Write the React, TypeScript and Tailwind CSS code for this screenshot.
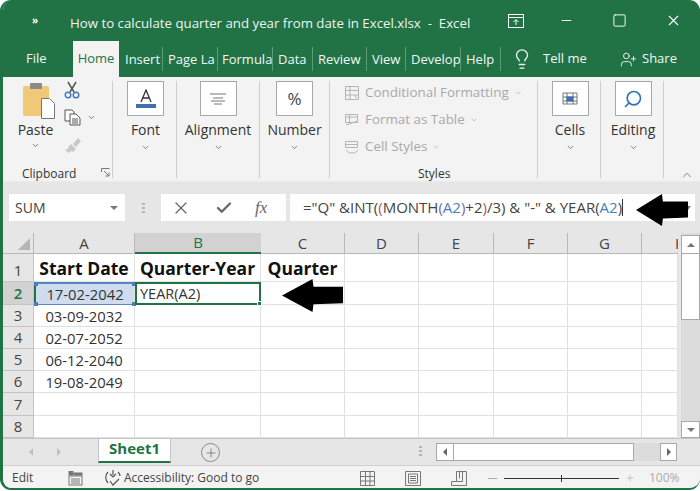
import React from 'react';
import { ChevronDown, ChevronUp, Lightbulb, Minus, Plus, Search, Square, UserPlus, X, Check } from 'lucide-react';

const tabs: [string, string][] = [
  ['Insert', 'w-[44px] pl-[6px]'],
  ['Page La', 'w-[55px] pl-[5px]'],
  ['Formula', 'w-[55px] pl-[4px]'],
  ['Data', 'w-[40px] pl-[5px]'],
  ['Review', 'w-[54px] pl-[5px]'],
  ['View', 'w-[39px] pl-[5px]'],
  ['Develop', 'w-[55px] pl-[5px]'],
  ['Help', 'w-[40px] pl-[5px]'],
];

const columns = ['A', 'B', 'C', 'D', 'E', 'F', 'G', 'H'];
const rowHeights = ['h-[28px]', 'h-[23px]', 'h-[22px]', 'h-[22px]', 'h-[22px]', 'h-[22px]', 'h-[23px]', 'h-[22px]'];
const dates = ['Start Date', '17-02-2042', '03-09-2032', '02-07-2052', '06-12-2040', '19-08-2049', '', ''];

const Arrow = ({ className }: { className: string }) => (
  <svg viewBox="0 0 60 34" preserveAspectRatio="none" className={className}>
    <polygon points="0,17 30,0 31,8 60,8 60,25 31,26 30,34" fill="#000" />
  </svg>
);

const Dots = () => (
  <div className="flex flex-col gap-[2px]">
    <span className="w-[3px] h-[2px] bg-[#b5b5b5]" />
    <span className="w-[3px] h-[2px] bg-[#b5b5b5]" />
    <span className="w-[3px] h-[2px] bg-[#b5b5b5]" />
  </div>
);

const RibbonButton = ({ label, width, children }: { label: string; width: string; children: React.ReactNode }) => (
  <div className={`${width} h-[97px] shrink-0 border-r border-[#cfcfcf] flex flex-col items-center`}>
    <div className="w-[37px] h-[35px] bg-white border border-[#a8a8a8] flex items-center justify-center">{children}</div>
    <span className="text-[14px] leading-[18px] mt-[5px] text-[#333]">{label}</span>
    <ChevronDown className="w-[9px] h-[9px] mt-[4px] text-[#555]" />
  </div>
);

const StyleRow = ({ label, children }: { label: string; children: React.ReactNode }) => (
  <div className="flex items-center h-[27px] gap-[5px] text-[13.4px] text-[#a9a9a9]">
    <svg viewBox="0 0 16 16" className="w-[16px] h-[16px]" fill="none" stroke="#b5b5b5">
      {children}
    </svg>
    <span>{label}</span>
    <ChevronDown className="w-[8px] h-[8px] text-[#b0b0b0]" />
  </div>
);

const App = () => {
  return (
    <div className="w-[700px] h-[491px] bg-white overflow-hidden font-['Open_Sans',sans-serif]">
      <div className="relative w-full h-[490px] flex flex-col rounded-[11px] overflow-hidden border-l-[3px] border-b-[2px] border-[#217346] bg-[#e6e6e6]">
        {/* title bar */}
        <div className="h-[41px] bg-[#217346] text-white flex items-center shrink-0">
          <span className="w-[67px] pl-[29px] text-[10px] font-bold">»</span>
          <span className="w-[432px] mt-[6px] text-[13.25px] whitespace-nowrap text-[#eef5f0]">
            How to calculate quarter and year from date in Excel.xlsx&nbsp; -&nbsp; Excel
          </span>
          <svg viewBox="0 0 16 14" className="w-[16px] h-[14px] ml-[6px]" fill="none" stroke="#fff">
            <rect x="0.5" y="0.5" width="15" height="13" />
            <path d="M0 3.5h16M8 11V6M5.5 8 8 5.5 10.5 8" />
          </svg>
          <Minus className="w-[15px] h-[15px] ml-[35px]" strokeWidth={1.5} />
          <Square className="w-[15px] h-[15px] ml-[38px]" strokeWidth={1.5} />
          <X className="w-[17px] h-[17px] ml-[38px]" strokeWidth={1.5} />
        </div>

        {/* tabs */}
        <div className="h-[36px] bg-[#217346] text-[#f2f7f4] text-[13px] flex items-center shrink-0">
          <span className="w-[70px] pl-[23px]">File</span>
          <span className="w-[46px] h-full bg-[#f3f3f3] text-[#217346] flex items-center justify-center">Home</span>
          {tabs.map(([name, width]) => (
            <div key={name} className={`${width} h-[24px] leading-[24px] border-r border-[#5d9a78] overflow-hidden whitespace-nowrap`}>
              {name}
            </div>
          ))}
          <Lightbulb className="w-[22px] h-[22px] ml-[10px]" strokeWidth={1.4} />
          <span className="ml-[10px] w-[77px]">Tell me</span>
          <UserPlus className="w-[17px] h-[17px]" strokeWidth={1.3} />
          <span className="ml-[5px]">Share</span>
        </div>

        {/* ribbon */}
        <div className="h-[105px] bg-[#f3f3f3] flex pt-[4px] shrink-0 relative border-b border-[#ebebeb]">
          <div className="w-[110px] h-[97px] shrink-0 border-r border-[#cfcfcf] flex relative">
            <div className="w-[61px] flex flex-col items-center pl-[4px]">
              <svg viewBox="0 0 32 38" className="w-[32px] h-[38px] ml-[6px]">
                <rect x="0" y="5" width="26" height="30" rx="2" fill="#f0c878" />
                <rect x="7" y="2" width="12" height="6" rx="1" fill="#8a8a8a" />
                <path d="M18.5 17.5h8l5 5v15h-13z" fill="#fff" stroke="#777" />
              </svg>
              <span className="text-[14px] leading-[18px] text-[#333] mt-[2px]">Paste</span>
              <ChevronDown className="w-[9px] h-[9px] text-[#555] mt-[2px]" />
            </div>
            <div className="flex flex-col items-start">
              <svg viewBox="0 0 16 18" className="w-[16px] h-[18px]" fill="none">
                <path d="M4 1 10 11M12 1 6 11" stroke="#555" strokeWidth="1.5" />
                <circle cx="4" cy="14" r="2.8" stroke="#3f78b5" strokeWidth="1.4" />
                <circle cx="12" cy="14" r="2.8" stroke="#3f78b5" strokeWidth="1.4" />
              </svg>
              <div className="flex items-center mt-[10px]">
                <svg viewBox="0 0 17 17" className="w-[17px] h-[17px]" fill="#fff" stroke="#555">
                  <path d="M1 1h7l2 2v9H1z" />
                  <path d="M6 5h6l4 4v7H6z" />
                  <path d="M8 10h6M8 12h6M8 14h6" />
                </svg>
                <ChevronDown className="w-[9px] h-[9px] text-[#555] ml-[6px]" />
              </div>
              <svg viewBox="0 0 17 15" className="w-[17px] h-[15px] mt-[12px]" fill="#c8c8c8">
                <path d="M9 6 14 0l3 3-5 6zM7 6l5 5-3 3-2-1-2 2-4-3 3-1 1-3z" />
              </svg>
            </div>
            <span className="absolute left-[19px] top-[85px] text-[12px] leading-[16px] text-[#333]">Clipboard</span>
            <svg viewBox="0 0 9 9" className="absolute left-[98px] top-[87px] w-[9px] h-[9px]" fill="none" stroke="#777">
              <path d="M.5 4V.5H8.5M3 3l5 5M8 4.5V8H4.5" />
            </svg>
          </div>

          <RibbonButton label="Font" width="w-[64px] pl-[2px]">
            <svg viewBox="0 0 20 20" className="w-[20px] h-[20px]">
              <path d="M5 13 10 1l5 12M7 9h6" fill="none" stroke="#333" strokeWidth="1.3" />
              <rect x="0" y="15" width="20" height="4" fill="#3f6fb0" />
            </svg>
          </RibbonButton>
          <RibbonButton label="Alignment" width="w-[83px]">
            <svg viewBox="0 0 16 12" className="w-[16px] h-[12px]" stroke="#777" strokeWidth="1.2">
              <path d="M0 1h16M3 5h10M1 8h14M4 11h8" />
            </svg>
          </RibbonButton>
          <RibbonButton label="Number" width="w-[70px]">
            <span className="text-[17px] text-[#444] leading-none">%</span>
          </RibbonButton>

          <div className="w-[208px] h-[97px] shrink-0 border-r border-[#cfcfcf] relative pl-[14px]">
            <div className="-mt-[2px]">
              <StyleRow label="Conditional Formatting">
                <path d="M1.5 1.5h13v13h-13zM1.5 5.5h13M1.5 10h13M6 1.5v13M10 10l3 3" />
              </StyleRow>
              <StyleRow label="Format as Table">
                <path d="M1.5 2.5h12v8h-12zM1.5 5h12M5.5 2.5v8M2 13l12-4" />
              </StyleRow>
              <StyleRow label="Cell Styles">
                <path d="M1.5 2.5h12v6h-12zM1.5 5.5h12M2 11c3 4 9 4 12 0" />
              </StyleRow>
            </div>
            <span className="absolute left-[88px] top-[85px] text-[12px] leading-[16px] text-[#333]">Styles</span>
          </div>

          <RibbonButton label="Cells" width="w-[63px] pl-[2px]">
            <svg viewBox="0 0 16 18" className="w-[16px] h-[18px]" fill="none" stroke="#777">
              <path d="M1 3h14v11H1zM1 7h14M1 11h14M5 3v11M11 3v11" />
              <rect x="5" y="7" width="6" height="4" fill="#3f6fb0" stroke="#3f6fb0" />
            </svg>
          </RibbonButton>
          <RibbonButton label="Editing" width="w-[63px] pl-[2px]">
            <Search className="w-[20px] h-[20px] text-[#2f75b5] -scale-x-100" strokeWidth={2} />
          </RibbonButton>
          <ChevronUp className="absolute right-[6px] top-[91px] w-[14px] h-[14px] text-[#666]" strokeWidth={1.3} />
        </div>

        {/* formula bar */}
        <div className="h-[51px] flex items-center pl-[6px] shrink-0">
          <div className="w-[116px] h-[27px] bg-white flex items-center justify-between pl-[6px] pr-[7px] text-[14px] text-[#444]">
            SUM
            <span className="w-0 h-0 border-x-[4px] border-x-transparent border-t-[4px] border-t-[#777]" />
          </div>
          <div className="w-[36px] flex justify-center">
            <Dots />
          </div>
          <div className="w-[125px] h-[27px] bg-white flex items-center text-[#666]">
            <X className="w-[20px] h-[20px] ml-[10px]" strokeWidth={1.5} />
            <Check className="w-[18px] h-[18px] ml-[24px]" strokeWidth={3} />
            <span className="ml-[22px] italic font-['Liberation_Serif',serif] text-[17px]">fx</span>
          </div>
          <div className="w-[405px] h-[27px] ml-[4px] bg-white flex items-center pl-[13px] pr-[3px] text-[15px] text-[#444] whitespace-nowrap">
            <span>="Q" &amp;INT(</span>
            <span className="text-[#c0504d]">(</span>
            <span>MONTH</span>
            <span className="text-[#7a5fa8]">(</span>
            <span className="text-[#4a7ebb]">A2</span>
            <span className="text-[#7a5fa8]">)</span>
            <span>+2</span>
            <span className="text-[#c0504d]">)</span>
            <span>/3) &amp; "-" &amp; YEAR(</span>
            <span className="text-[#4a7ebb]">A2</span>
            <span>)</span>
            <span className="w-px h-[17px] bg-[#333]" />
            <span className="ml-auto mr-[1px] w-0 h-0 border-x-[3px] border-x-transparent border-t-[4px] border-t-[#777]" />
          </div>
        </div>

        {/* sheet */}
        <div className="flex h-[205px] shrink-0">
          <div className="grid grid-cols-[31px_101px_126px_84px_74px_75px_74px_74px_36px] content-start w-[675px] bg-white overflow-hidden">
            <div className="h-[21px] bg-[#e6e6e6] border-r border-b border-[#b8b8b8] relative">
              <span className="absolute right-[3px] bottom-[3px] w-0 h-0 border-l-[12px] border-l-transparent border-b-[12px] border-b-[#b5b5b5]" />
            </div>
            {columns.map((c) => (
              <div
                key={c}
                className={
                  c === 'B'
                    ? 'h-[21px] bg-[#d2d2d2] border-b-2 border-[#217346] text-[#217346] text-[15px] flex items-center justify-center'
                    : c === 'H'
                      ? 'h-[21px] bg-[#e6e6e6] border-b border-[#b8b8b8] text-[#444] text-[15px] flex items-center justify-start pl-[33px] overflow-hidden'
                      : 'h-[21px] bg-[#e6e6e6] border-r border-b border-[#b8b8b8] text-[#444] text-[15px] flex items-center justify-center'
                }
              >
                {c}
              </div>
            ))}
            {rowHeights.map((h, r) => (
              <React.Fragment key={h + r}>
                <div
                  className={`${h} border-r border-b border-[#c4c4c4] flex justify-center text-[15px] ${
                    r === 0 ? 'items-end' : 'items-center'
                  } ${r === 1 ? 'bg-[#d2d2d2] text-[#217346] font-semibold' : 'bg-[#e6e6e6] text-[#444]'}`}
                >
                  {r + 1}
                </div>
                {columns.map((c) => {
                  let content = '';
                  let cls = 'border-r border-b border-[#e0e0e0]';
                  if (r === 0 && c === 'B') content = 'Quarter-Year';
                  if (r === 0 && c === 'C') content = 'Quarter';
                  if (c === 'A') content = dates[r];
                  if (r === 0) cls += ' text-[17.5px] font-bold text-[#111] items-end justify-center';
                  else if (c === 'A') cls += ' text-[14.8px] text-[#333] items-center justify-center pt-[1px]';
                  if (r === 1 && c === 'A') cls += ' relative bg-[#cfdcee] border-y-2 border-l-2 border-l-[#217346] border-y-[#5b87c5]';
                  if (r === 1 && c === 'B') cls = 'border-2 border-[#217346] text-[14.5px] text-[#333] items-center pl-[3px] relative';
                  return (
                    <div key={c} className={`${h} ${cls} flex whitespace-nowrap overflow-visible`}>
                      {r === 1 && c === 'B' ? 'YEAR(A2)' : content}
                      {r === 1 && c === 'A' && (
                        <>
                          <span className="absolute -left-[2px] -top-[2px] w-[4px] h-[4px] bg-[#4a7ebb]" />
                          <span className="absolute -left-[2px] -bottom-[2px] w-[4px] h-[4px] bg-[#4a7ebb]" />
                          <span className="absolute -right-[2px] -top-[2px] w-[4px] h-[4px] bg-[#4a7ebb]" />
                          <span className="absolute -right-[2px] -bottom-[2px] w-[4px] h-[4px] bg-[#4a7ebb]" />
                        </>
                      )}
                      {r === 1 && c === 'B' && (
                        <span className="absolute -right-[3px] -bottom-[3px] w-[5px] h-[5px] bg-[#217346] border border-white" />
                      )}
                    </div>
                  );
                })}
              </React.Fragment>
            ))}
          </div>
          <div className="w-[19px] ml-[3px] bg-[#dcdcdc] flex flex-col">
            <div className="h-[19px] mt-[2px] bg-white border border-[#a8a8a8] flex items-center justify-center">
              <span className="w-0 h-0 border-x-[4px] border-x-transparent border-b-[4px] border-b-[#777]" />
            </div>
            <div className="h-[66px] bg-white border border-t-0 border-[#a8a8a8]" />
            <div className="h-[17px] mt-auto bg-white border border-[#a8a8a8] flex items-center justify-center">
              <span className="w-0 h-0 border-x-[4px] border-x-transparent border-t-[4px] border-t-[#777]" />
            </div>
          </div>
        </div>

        {/* sheet tabs */}
        <div className="h-[27px] flex items-start border-t border-[#c4c4c4] shrink-0">
          <span className="ml-[26px] mt-[9px] w-0 h-0 border-y-[4px] border-y-transparent border-r-[4px] border-r-[#c0c0c0]" />
          <span className="ml-[24px] mt-[9px] w-0 h-0 border-y-[4px] border-y-transparent border-l-[4px] border-l-[#c0c0c0]" />
          <div className="ml-[37px] w-[73px] h-[24px] pb-[3px] bg-white border-x border-b-2 border-x-[#c4c4c4] border-b-[#217346] text-[#217346] font-bold text-[15px] flex items-center justify-center">
            Sheet1
          </div>
          <div className="ml-[30px] mt-[4px] w-[19px] h-[19px] rounded-full border border-[#8a8a8a] flex items-center justify-center">
            <Plus className="w-[14px] h-[14px] text-[#777]" strokeWidth={1.5} />
          </div>
          <div className="ml-[199px] mt-[7px]">
            <Dots />
          </div>
          <div className="ml-[14px] mt-[4px] w-[241px] h-[18px] flex bg-[#dcdcdc]">
            <div className="w-[18px] bg-white border border-[#a8a8a8] flex items-center justify-center">
              <span className="w-0 h-0 border-y-[4px] border-y-transparent border-r-[4px] border-r-[#666]" />
            </div>
            <div className="w-[180px] bg-white border-y border-r border-[#a8a8a8]" />
            <div className="w-[17px] ml-auto bg-white border border-[#a8a8a8] flex items-center justify-center">
              <span className="w-0 h-0 border-y-[4px] border-y-transparent border-l-[4px] border-l-[#666]" />
            </div>
          </div>
        </div>

        {/* status bar */}
        <div className="flex-1 bg-[#f3f3f3] border-t border-[#d0d0d0] flex items-center pt-[2px] text-[12px] text-[#444]">
          <span className="ml-[9px] w-[56px]">Edit</span>
          <svg viewBox="0 0 15 15" className="w-[15px] h-[15px]" fill="none" stroke="#777">
            <rect x="1" y="5" width="13" height="9" />
            <path d="M3 8h9M3 10h9M3 12h9" />
            <rect x="1" y="0" width="4" height="4" fill="#777" />
            <rect x="6" y="2" width="8" height="2" fill="#777" />
          </svg>
          <svg viewBox="0 0 18 18" className="w-[18px] h-[18px] ml-[21px]" fill="none" stroke="#555" strokeWidth="1.2">
            <path d="M4 3C1 6 1 11 4 14M14 3c1 1 2 3 2 4M9 1v5M6 5l3 3 3-3M6 12l3 4 6-6" />
          </svg>
          <span className="ml-[2px] w-[236px] whitespace-nowrap">Accessibility: Good to go</span>
          <svg viewBox="0 0 15 15" className="w-[15px] h-[15px]" fill="none" stroke="#777">
            <path d="M.5.5h14v14H.5zM.5 5.5h14M.5 10h14M5.5.5v14M10 .5v14" />
          </svg>
          <svg viewBox="0 0 16 15" className="w-[16px] h-[15px] ml-[30px]" fill="none" stroke="#777">
            <path d="M.5.5h15v14H.5zM3.5 3h9v9h-9zM5 5.5h6M5 7.5h6M5 9.5h6" />
          </svg>
          <svg viewBox="0 0 16 15" className="w-[16px] h-[15px] ml-[30px]" fill="none" stroke="#777">
            <path d="M.5 10.5h5v-10h10v14H.5zM5.5 10.5h6v-10M8.5.5v7" />
          </svg>
          <span className="ml-[21px] w-[9px] h-px bg-[#aaa]" />
          <div className="ml-[7px] w-[115px] h-px bg-[#333] relative">
            <span className="absolute left-[57px] -top-[3px] w-px h-[7px] bg-[#333]" />
          </div>
          <Plus className="w-[10px] h-[10px] ml-[6px] text-[#aaa]" strokeWidth={1.5} />
          <span className="ml-[14px] text-[#aaa]">100%</span>
        </div>

        <Arrow className="absolute left-[279px] top-[279px] w-[61px] h-[33px]" />
        <Arrow className="absolute left-[633px] top-[194px] w-[52px] h-[32px]" />
      </div>
    </div>
  );
};

export default App;
